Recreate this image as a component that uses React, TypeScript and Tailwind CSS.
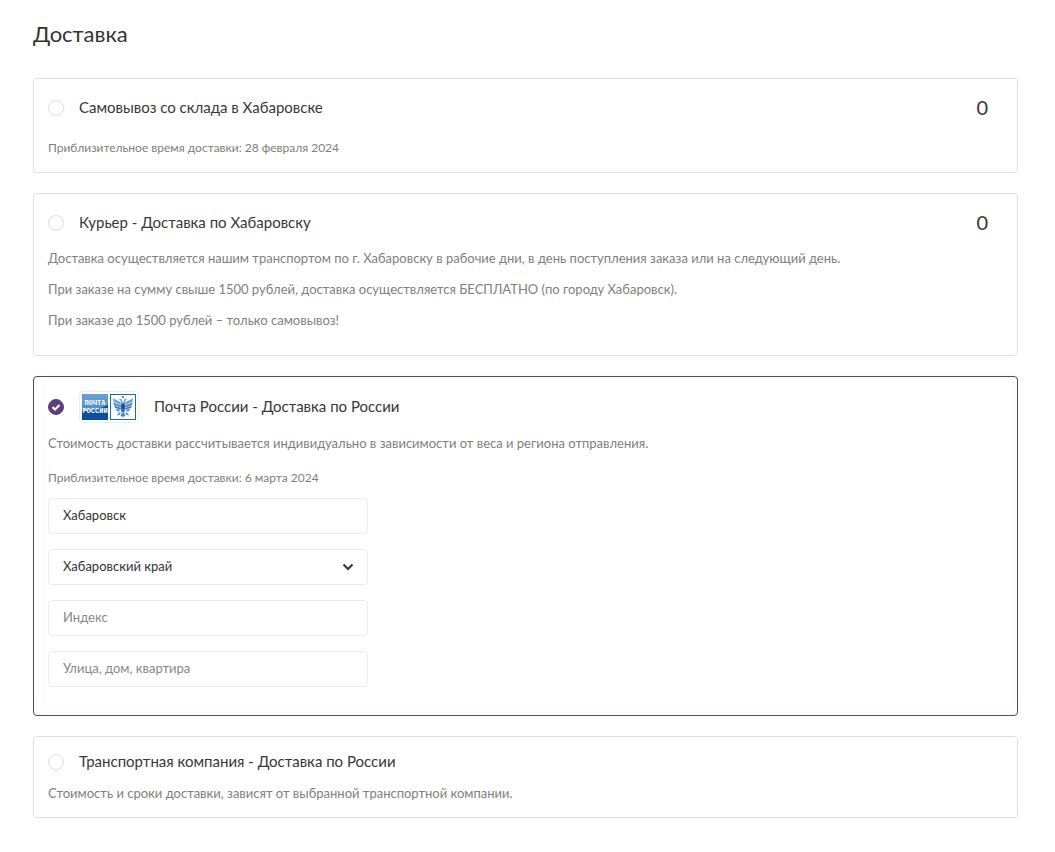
import { useState, type ReactNode } from 'react'

type OptionProps = {
  id: string
  title: string
  selected: string
  onSelect: (id: string) => void
  logo?: ReactNode
  price?: string
  compact?: boolean
  children: ReactNode
}

function PostLogo() {
  return (
    <svg
      viewBox="0 0 60 32"
      className="h-8 w-[60px] shrink-0"
      role="img"
      aria-label="Почта России"
    >
      <defs>
        <linearGradient id="post-sky" x1="0" y1="0" x2="0" y2="1">
          <stop offset="0" stopColor="#6d9fd0" />
          <stop offset="1" stopColor="#3f82c2" />
        </linearGradient>
        <linearGradient id="post-wing" x1="0" y1="0" x2="0" y2="1">
          <stop offset="0" stopColor="#7fb0dd" />
          <stop offset="1" stopColor="#1f66b3" />
        </linearGradient>
      </defs>
      <rect x="0.5" y="0.5" width="59" height="31" rx="3" fill="#fff" stroke="#ececec" />
      <rect x="3" y="3" width="26" height="26" fill="url(#post-sky)" />
      <path d="M3 20c8 0 17-2 26-6v15H3z" fill="#0b4fa0" />
      <text x="16" y="14" textAnchor="middle" fontSize="7" fontWeight="700" fill="#fff" fontFamily="'Liberation Mono', monospace">
        ПОЧТА
      </text>
      <text x="16" y="22" textAnchor="middle" fontSize="7" fontWeight="700" fill="#fff" fontFamily="'Liberation Mono', monospace">
        РОССИИ
      </text>
      <rect x="31.5" y="3.5" width="25" height="25" fill="#fff" stroke="#1f66b3" />
      <g fill="url(#post-wing)">
        <path d="M33.500 7l7.500 4 1.500 3-8-3.500zM34 11l8 3.500v2l-7-2.500zM35 14.500l7 2.500-.5 1.500-5.500-1.500zM36.500 18l5 1-2.500 1.500z" />
        <path d="M54.500 7L47 11l-1.500 3 8-3.500zM54 11l-8 3.500v2l7-2.500zM53 14.500L46 17l.5 1.500L52 17zM51.500 18l-5 1 2.500 1.500z" />
        <path d="M41 7.500l1.500.5 1 3h1l1-3 1.500-.5 1 1.500-1.500.5-.5 3V20l-2 2-2-2v-7.500l-.5-3L40 9z" />
        <path d="M42.500 21.500h3l1 4-1.500-.5-1 1.500-1-1.500-1.500.5zM40 21l2 .5-1.500 2.500-2.500.5zM48 21l-2 .5 1.500 2.500 2.500.5z" />
        <path d="M43 5h2v2h-2z" />
      </g>
      <path d="M42.500 13h3v4L44 18.500 42.500 17z" fill="#0b4fa0" />
    </svg>
  )
}

function Option({ id, title, selected, onSelect, logo, price, compact, children }: OptionProps) {
  const checked = selected === id

  return (
    <section
      className={
        checked
          ? 'rounded border border-[#5b4080] p-3.5'
          : 'rounded border border-[#dfdfdf] p-3.5'
      }
    >
      <div className={compact ? 'flex h-[22px] items-center' : 'flex min-h-[30px] items-center'}>
        <label className="flex cursor-pointer items-center gap-[15px] text-[15px] text-[#383838]">
          <span className="grid size-4 shrink-0 place-items-center">
            <input
              type="radio"
              name="delivery"
              value={id}
              checked={checked}
              onChange={() => onSelect(id)}
              className="col-start-1 row-start-1 size-4 appearance-none rounded-full border border-[#dcdcdc] bg-white checked:border-[#5b4080] checked:bg-[#5b4080]"
            />
            {checked && (
              <svg
                viewBox="0 0 16 16"
                className="pointer-events-none z-10 col-start-1 row-start-1 size-4"
                fill="none"
                stroke="#fff"
                strokeWidth="2"
              >
                <path d="M4.500 8l2.500 2.500L11.500 6" />
              </svg>
            )}
          </span>
          {logo}
          <span className="pb-[3px] leading-5">{title}</span>
        </label>
        {price && <span className="ml-auto pr-[15px] pb-0.5 text-xl text-[#383838]">{price}</span>}
      </div>
      {children}
    </section>
  )
}

const fieldClass =
  'h-9 w-full appearance-none rounded border border-[#ebebeb] bg-white px-3.5 pb-0.5 text-[13px] text-[#333] outline-none placeholder:text-[#888] placeholder:opacity-100'

export default function App() {
  const [selected, setSelected] = useState('post')
  const [city, setCity] = useState('Хабаровск')

  return (
    <main className="bg-white pt-4 pr-[37px] pb-8 pl-[33px] font-[Lato,sans-serif] text-[13px] leading-5 text-[#808080]">
      <h1 className="mb-[26px] text-[22px] leading-9 text-[#333]">Доставка</h1>

      <form className="flex flex-col gap-5">
        <Option id="pickup" title="Самовывоз со склада в Хабаровске" price="0" selected={selected} onSelect={setSelected}>
          <p className="mt-[15px] text-xs leading-5">Приблизительное время доставки: 28 февраля 2024</p>
        </Option>

        <Option id="courier" title="Курьер - Доставка по Хабаровску" price="0" selected={selected} onSelect={setSelected}>
          <div className="mt-2.5 mb-[11px] flex flex-col gap-[11px]">
            <p>Доставка осуществляется нашим транспортом по г. Хабаровску в рабочие дни, в день поступления заказа или на следующий день.</p>
            <p>При заказе на сумму свыше 1500 рублей, доставка осуществляется БЕСПЛАТНО (по городу Хабаровск).</p>
            <p>При заказе до 1500 рублей – только самовывоз!</p>
          </div>
        </Option>

        <Option id="post" title="Почта России - Доставка по России" logo={<PostLogo />} selected={selected} onSelect={setSelected}>
          <p className="mt-2.5">Стоимость доставки рассчитывается индивидуально в зависимости от веса и региона отправления.</p>
          <p className="mt-[15px] text-xs leading-5">Приблизительное время доставки: 6 марта 2024</p>
          <div className="mt-2.5 mb-3.5 flex max-w-80 flex-col gap-[15px]">
            <input
              aria-label="Город"
              value={city}
              onChange={(e) => setCity(e.target.value)}
              className={fieldClass}
            />
            <div className="relative">
              <select aria-label="Регион" className={fieldClass}>
                <option>Хабаровский край</option>
              </select>
              <svg
                viewBox="0 0 12 8"
                className="pointer-events-none absolute top-3.5 right-3.5 h-2 w-3"
                fill="none"
                stroke="#333"
                strokeWidth="2"
              >
                <path d="M1.500 1.500L6 6l4.500-4.500" />
              </svg>
            </div>
            <input aria-label="Индекс" placeholder="Индекс" className={fieldClass} />
            <input aria-label="Адрес" placeholder="Улица, дом, квартира" className={fieldClass} />
          </div>
        </Option>

        <Option id="cargo" title="Транспортная компания - Доставка по России" compact selected={selected} onSelect={setSelected}>
          <p className="mt-2.5">Стоимость и сроки доставки, зависят от выбранной транспортной компании.</p>
        </Option>
      </form>
    </main>
  )
}
